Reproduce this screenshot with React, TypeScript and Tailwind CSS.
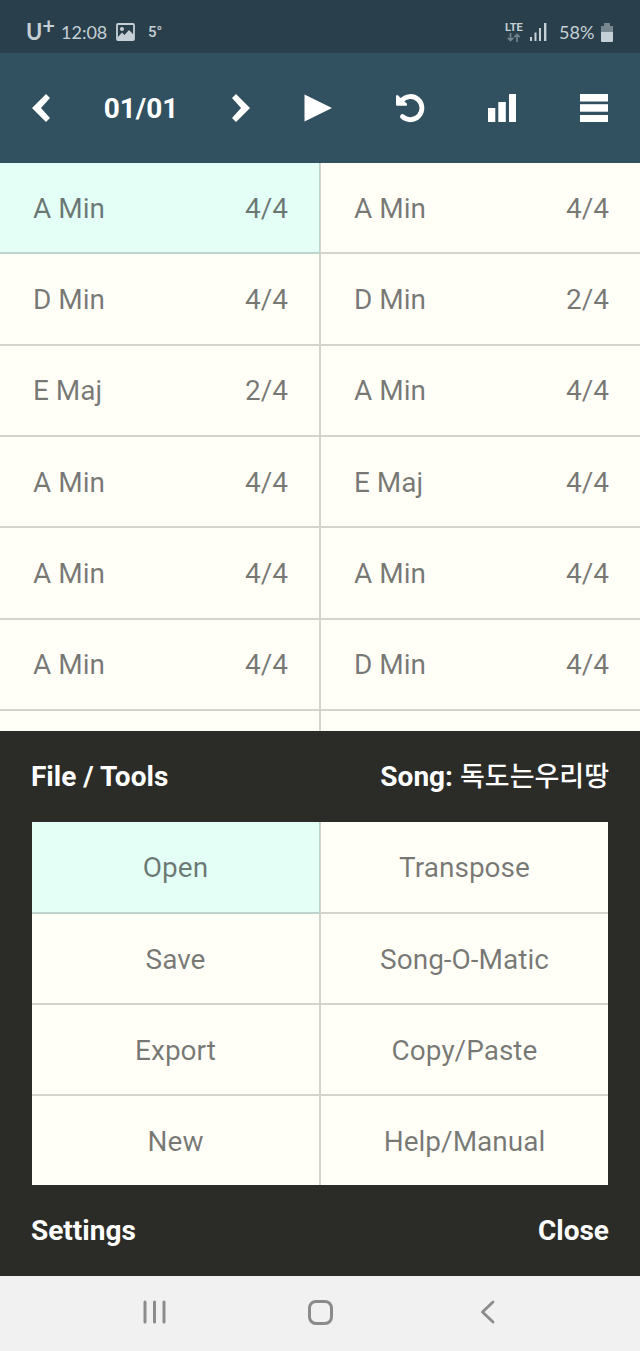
import clsx from "clsx";

const measures = [
    { chord: "A Min", time: "4/4" },
    { chord: "A Min", time: "4/4" },
    { chord: "D Min", time: "4/4" },
    { chord: "D Min", time: "2/4" },
    { chord: "E Maj", time: "2/4" },
    { chord: "A Min", time: "4/4" },
    { chord: "A Min", time: "4/4" },
    { chord: "E Maj", time: "4/4" },
    { chord: "A Min", time: "4/4" },
    { chord: "A Min", time: "4/4" },
    { chord: "A Min", time: "4/4" },
    { chord: "D Min", time: "4/4" },
];

const tools = [
    "Open",
    "Transpose",
    "Save",
    "Song-O-Matic",
    "Export",
    "Copy/Paste",
    "New",
    "Help/Manual",
];

function StatusBar() {
    return (
        <div className="flex h-[53px] items-center justify-between bg-[#293f4b] pt-[11px] pr-[27px] pl-[26px] text-[#c5d0d6]">
            <div className="flex items-center">
                <span className="flex w-[35px] items-start font-['Lato'] text-[22px] leading-7 font-bold">
                    U<sup className="top-0 text-[22px] leading-4">+</sup>
                </span>
                <span className="w-[55px] font-['Lato'] text-[18px] leading-6">
                    12:08
                </span>
                <svg viewBox="0 0 19 18" className="h-[18px] w-[19px]">
                    <rect x="1" y="1" width="17" height="16" rx="1" fill="none" stroke="currentColor" strokeWidth="1.8" />
                    <circle cx="6" cy="6" r="2" fill="currentColor" />
                    <path d="M2 14 L6 9.5 L8.5 12 L13 7 L18 12 V17 H2 Z" fill="currentColor" />
                </svg>
                <span className="ml-[13px] text-[15px] leading-6 font-medium">5°</span>
            </div>

            <div className="flex items-center">
                <div className="flex w-[25px] flex-col items-start">
                    <span className="text-[11px] leading-[11px] font-bold">LTE</span>
                    <svg viewBox="0 0 14 9" className="ml-[2px] h-[9px] w-[14px] text-[#71838d]">
                        <path
                            d="M3.5 0 V7.5 M0.8 4.8 L3.5 7.5 L6.2 4.8 M10 9 V1.5 M7.3 4.2 L10 1.5 L12.7 4.2"
                            fill="none"
                            stroke="currentColor"
                            strokeWidth="1.7"
                        />
                    </svg>
                </div>
                <svg viewBox="0 0 17 18" className="h-[18px] w-[17px]" fill="currentColor">
                    <rect x="0" y="14" width="2" height="4" />
                    <rect x="4.5" y="9.5" width="2" height="8.5" />
                    <rect x="9" y="5" width="2" height="13" />
                    <rect x="14" y="0" width="2.4" height="18" />
                </svg>
                <span className="ml-3 w-[42px] font-['Lato'] text-[18px] leading-6">58%</span>
                <svg viewBox="0 0 12 19" className="h-[19px] w-3" fill="currentColor">
                    <path d="M3 0 H9 V3 H12 V9 H0 V3 H3 Z" opacity="0.5" />
                    <path d="M0 9 H12 V18 Q12 19 11 19 H1 Q0 19 0 18 Z" />
                </svg>
            </div>
        </div>
    );
}

function Toolbar() {
    return (
        <header className="grid h-[110px] grid-cols-[218fr_304fr] items-center gap-[54px] bg-[#315060] px-8 text-white">
            <div className="flex items-center justify-between">
                <button aria-label="Previous page">
                    <svg viewBox="0 0 18 28" className="h-7 w-[18px]">
                        <path d="M14 0 L18 4 L9 14 L18 24 L14 28 L0 14 Z" fill="currentColor" />
                    </svg>
                </button>
                <span className="pt-[2px] text-[28px] leading-8 font-bold">01/01</span>
                <button aria-label="Next page">
                    <svg viewBox="0 0 18 28" className="h-7 w-[18px]">
                        <path d="M4 0 L0 4 L9 14 L0 24 L4 28 L18 14 Z" fill="currentColor" />
                    </svg>
                </button>
            </div>

            <div className="flex items-center justify-between">
                <button aria-label="Play">
                    <svg viewBox="0 0 28 28" className="size-7">
                        <path d="M0.5 0.5 L28 14 L0.5 27.5 Z" fill="currentColor" />
                    </svg>
                </button>
                <button aria-label="Undo">
                    <svg viewBox="0 0 28 28" className="size-7 overflow-visible">
                        <path
                            d="M5.5 6.6 A11.6 11.6 0 1 1 6.4 22.6"
                            fill="none"
                            stroke="currentColor"
                            strokeWidth="4.8"
                            strokeLinecap="round"
                        />
                        <path d="M0 1.8 Q0.6 0.4 2 1.4 L11 9.8 Q11.6 11.7 10 11.7 H1.2 Q0 11.7 0 10.5 Z" fill="currentColor" />
                    </svg>
                </button>
                <button aria-label="Mixer">
                    <svg viewBox="0 0 28 28" className="size-7" fill="currentColor">
                        <rect x="0" y="14" width="7.3" height="14" />
                        <rect x="10.3" y="8" width="7.5" height="20" />
                        <rect x="21" y="0" width="7" height="28" />
                    </svg>
                </button>
                <button aria-label="Menu">
                    <svg viewBox="0 0 28 28" className="size-7" fill="currentColor">
                        <rect y="0" width="28" height="7.5" />
                        <rect y="10.2" width="28" height="7.5" />
                        <rect y="21" width="28" height="7" />
                    </svg>
                </button>
            </div>
        </header>
    );
}

function SongGrid() {
    return (
        <main className="grid flex-1 grid-cols-2 grid-rows-[repeat(6,91fr)_20fr] bg-[#fffff8] text-[28px] leading-8 text-black/53">
            {measures.map((measure, index) => (
                <button
                    key={index}
                    className={clsx(
                        "flex items-center justify-between border-b-2 border-black/17 pt-[2px] pr-[31px] pl-[33px]",
                        index % 2 === 0 ? "border-r" : "border-l",
                        index === 0 && "bg-[#e4fff6]"
                    )}
                >
                    <span>{measure.chord}</span>
                    <span>{measure.time}</span>
                </button>
            ))}

            {/* Top of the next row */}
            <div className="border-r border-black/17" />
            <div className="border-l border-black/17" />
        </main>
    );
}

function ToolsPanel() {
    return (
        <section className="bg-[#2b2b27] px-8 text-[28px] leading-8">
            <div className="-mx-px flex h-[91px] items-center justify-between font-bold text-white">
                <h2>File / Tools</h2>
                <p>
                    Song: <span className="text-[27px] font-medium">독도는우리땅</span>
                </p>
            </div>

            <div className="grid grid-cols-2 grid-rows-[92px_91px_91px_89px] bg-[#fffff8] text-black/53">
                {tools.map((tool, index) => (
                    <button
                        key={tool}
                        className={clsx(
                            "border-black/17 pt-[2px]",
                            index % 2 === 0 ? "border-r" : "border-l",
                            index < 6 && "border-b-2",
                            index === 0 && "bg-[#e4fff6]"
                        )}
                    >
                        {tool}
                    </button>
                ))}
            </div>

            <div className="-mx-px flex h-[91px] items-center justify-between font-bold text-white">
                <button>Settings</button>
                <button>Close</button>
            </div>
        </section>
    );
}

function NavigationBar() {
    return (
        <nav className="flex h-[75px] items-center justify-evenly bg-[#f1f1f1] pb-[3px] text-[#8b8b8b]">
            <button aria-label="Recent apps">
                <svg viewBox="0 0 26 26" className="size-[26px]" fill="none" stroke="currentColor" strokeWidth="3" strokeLinecap="round">
                    <path d="M4 3 V23 M13.5 3 V23 M23 3 V23" />
                </svg>
            </button>
            <button aria-label="Home">
                <svg viewBox="0 0 26 26" className="size-[26px]" fill="none" stroke="currentColor" strokeWidth="3">
                    <rect x="2.5" y="2.5" width="22" height="22" rx="6.5" />
                </svg>
            </button>
            <button aria-label="Back">
                <svg viewBox="0 0 26 26" className="size-[26px]" fill="none" stroke="currentColor" strokeWidth="2.8" strokeLinecap="round" strokeLinejoin="round">
                    <path d="M19 3 L8.5 13 L19 23" />
                </svg>
            </button>
        </nav>
    );
}

export default function App() {
    return (
        <div className="flex min-h-screen flex-col font-['Roboto','Noto_Sans_CJK_KR',sans-serif]">
            <StatusBar />
            <Toolbar />
            <SongGrid />
            <ToolsPanel />
            <NavigationBar />
        </div>
    );
}
